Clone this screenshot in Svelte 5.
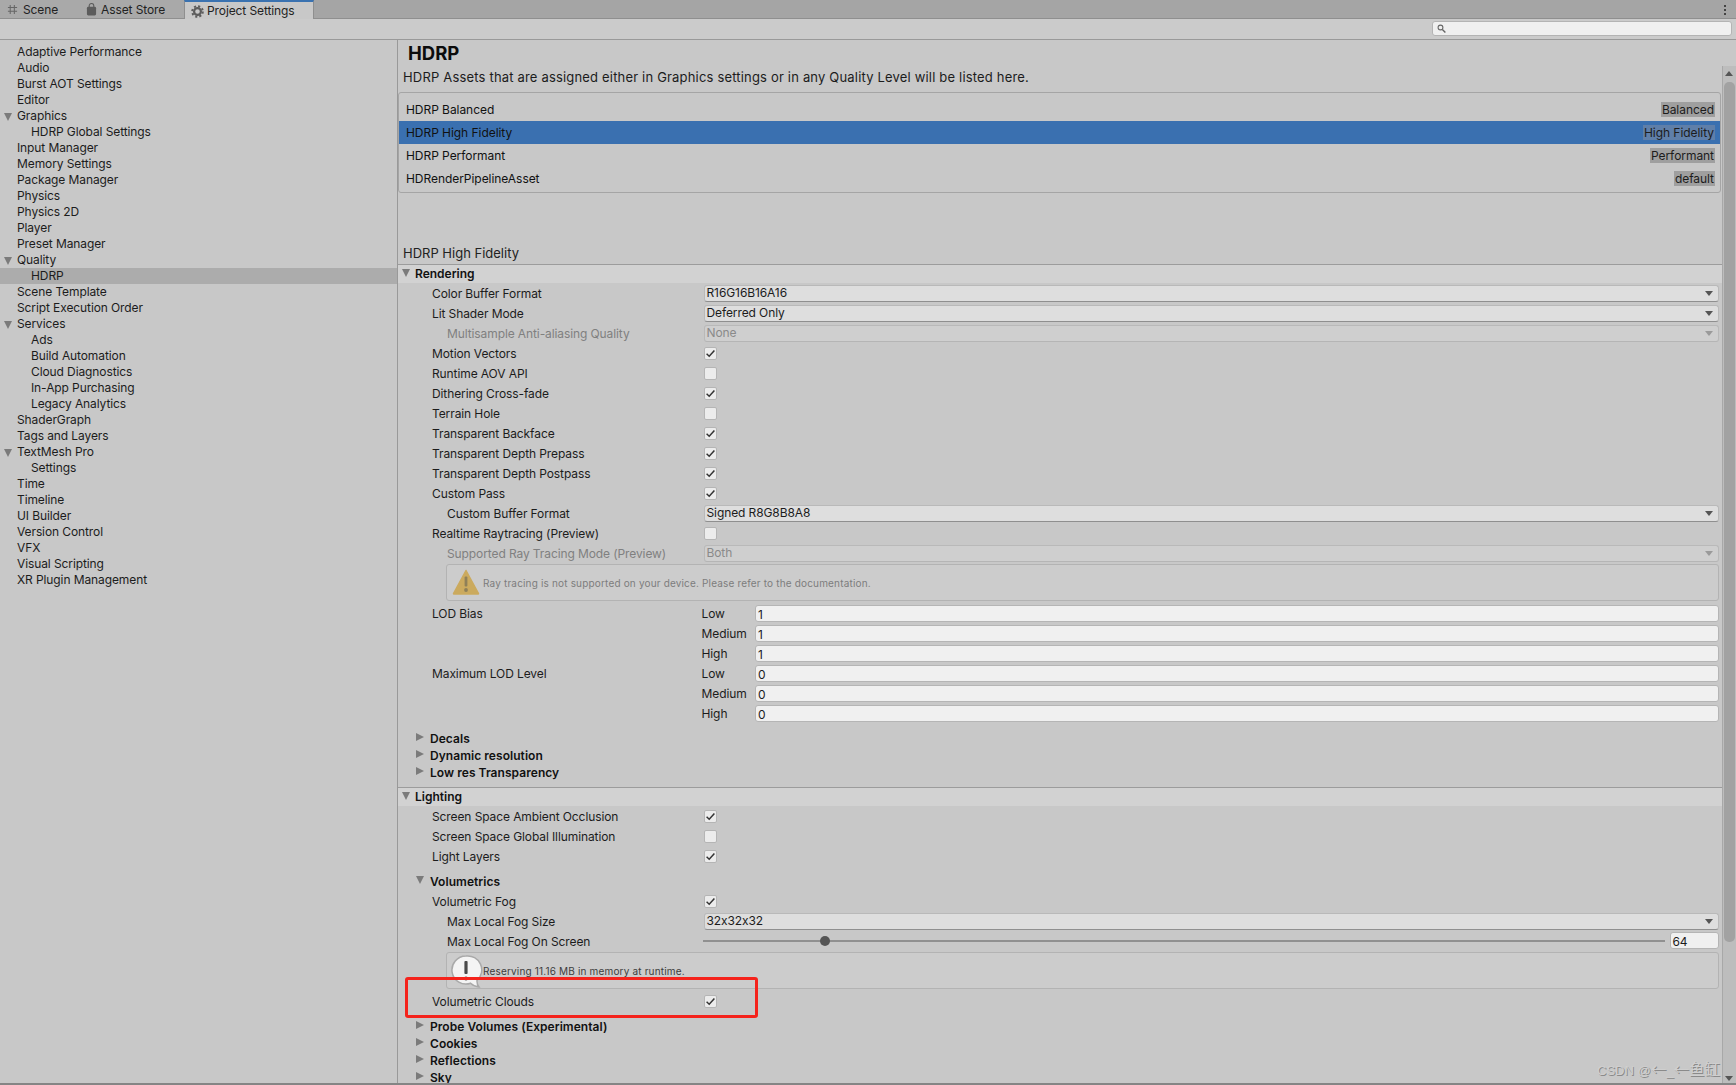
<script>
  const nav = [
    { t: 'Adaptive Performance' }, { t: 'Audio' }, { t: 'Burst AOT Settings' }, { t: 'Editor' },
    { t: 'Graphics', open: true }, { t: 'HDRP Global Settings', sub: true }, { t: 'Input Manager' },
    { t: 'Memory Settings' }, { t: 'Package Manager' }, { t: 'Physics' }, { t: 'Physics 2D' },
    { t: 'Player' }, { t: 'Preset Manager' }, { t: 'Quality', open: true }, { t: 'HDRP', sub: true, sel: true },
    { t: 'Scene Template' }, { t: 'Script Execution Order' }, { t: 'Services', open: true },
    { t: 'Ads', sub: true }, { t: 'Build Automation', sub: true }, { t: 'Cloud Diagnostics', sub: true },
    { t: 'In-App Purchasing', sub: true }, { t: 'Legacy Analytics', sub: true }, { t: 'ShaderGraph' },
    { t: 'Tags and Layers' }, { t: 'TextMesh Pro', open: true }, { t: 'Settings', sub: true }, { t: 'Time' },
    { t: 'Timeline' }, { t: 'UI Builder' }, { t: 'Version Control' }, { t: 'VFX' }, { t: 'Visual Scripting' },
    { t: 'XR Plugin Management' }
  ];
  const assets = [
    { n: 'HDRP Balanced', q: 'Balanced' },
    { n: 'HDRP High Fidelity', q: 'High Fidelity', sel: true },
    { n: 'HDRP Performant', q: 'Performant' },
    { n: 'HDRenderPipelineAsset', q: 'default' }
  ];
  const rendering = [
    { l: 'Color Buffer Format', d: 'R16G16B16A16' },
    { l: 'Lit Shader Mode', d: 'Deferred Only' },
    { l: 'Multisample Anti-aliasing Quality', d: 'None', sub: true, off: true },
    { l: 'Motion Vectors', c: true },
    { l: 'Runtime AOV API', c: false },
    { l: 'Dithering Cross-fade', c: true },
    { l: 'Terrain Hole', c: false },
    { l: 'Transparent Backface', c: true },
    { l: 'Transparent Depth Prepass', c: true },
    { l: 'Transparent Depth Postpass', c: true },
    { l: 'Custom Pass', c: true },
    { l: 'Custom Buffer Format', d: 'Signed R8G8B8A8', sub: true },
    { l: 'Realtime Raytracing (Preview)', c: false },
    { l: 'Supported Ray Tracing Mode (Preview)', d: 'Both', sub: true, off: true }
  ];
  const lod = [
    { l: 'LOD Bias', s: 'Low', v: '1' }, { l: '', s: 'Medium', v: '1' }, { l: '', s: 'High', v: '1' },
    { l: 'Maximum LOD Level', s: 'Low', v: '0' }, { l: '', s: 'Medium', v: '0' }, { l: '', s: 'High', v: '0' }
  ];
  const lighting = [
    { l: 'Screen Space Ambient Occlusion', c: true },
    { l: 'Screen Space Global Illumination', c: false },
    { l: 'Light Layers', c: true }
  ];
  const volFirst = [
    { l: 'Volumetric Fog', c: true },
    { l: 'Max Local Fog Size', d: '32x32x32', sub: true }
  ];
</script>

{#snippet row(r)}
  <div class="row" class:off={r.off}>
    <div class="label" class:sub={r.sub}>{r.l}</div>
    {#if r.d}
      <div class="drop" class:dis={r.off}>
        <span>{r.d}</span>
        <i class="caret"></i>
      </div>
    {:else}
      <div class="check">
        {#if r.c}
          <svg width="11" height="11" viewBox="0 0 11 11"><path d="M1.6 5.8 L4.2 8.2 L9.4 2.4" fill="none" stroke="#333" stroke-width="1.5"/></svg>
        {/if}
      </div>
    {/if}
  </div>
{/snippet}

{#snippet fold(t, open)}
  <div class="fold">
    <i class={open ? 'tri-down' : 'tri-right'}></i>
    <b>{t}</b>
  </div>
{/snippet}

<div class="root">
  <div class="tabs">
    <div class="tab scene">
      <svg width="11" height="11" viewBox="0 0 12 12"><path d="M3.5 1v10M8 1v10M1 3.8h10M1 8h10" stroke="#666" stroke-width="1.1" fill="none"/></svg>
      <span>Scene</span>
    </div>
    <div class="tab store">
      <svg width="11" height="13" viewBox="0 0 12 14"><path d="M3.5 5V3a2.5 2.5 0 0 1 5 0v2" stroke="#5c5c5c" stroke-width="1.2" fill="none"/><rect x="1" y="4" width="10" height="9.5" rx="1.5" fill="#5c5c5c"/></svg>
      <span>Asset Store</span>
    </div>
    <div class="tab active">
      <svg width="13" height="13" viewBox="0 0 13 13"><circle cx="6.5" cy="6.5" r="3.4" fill="none" stroke="#5c5c5c" stroke-width="2.2"/><circle cx="6.5" cy="6.5" r="5.3" fill="none" stroke="#5c5c5c" stroke-width="2" stroke-dasharray="2.1 2.06"/></svg>
      <span>Project Settings</span>
    </div>
    <div class="kebab"><i></i><i></i><i></i></div>
  </div>

  <div class="toolbar">
    <div class="search">
      <svg width="9" height="9" viewBox="0 0 9 9"><circle cx="3.5" cy="3.5" r="2.4" fill="none" stroke="#666" stroke-width="1.1"/><path d="M5.4 5.4 8.4 8.4" stroke="#666" stroke-width="1.4"/></svg>
    </div>
  </div>

  <div class="main">
    <nav class="side">
      {#each nav as n}
        <div class="nav" class:sub={n.sub} class:sel={n.sel}>
          {#if n.open}<i class="tri-down navtri"></i>{/if}
          {n.t}
        </div>
      {/each}
    </nav>

    <section class="content">
      <h1>HDRP</h1>
      <p class="intro">HDRP Assets that are assigned either in Graphics settings or in any Quality Level will be listed here.</p>
      <div class="assets">
        {#each assets as a}
          <div class="asset" class:sel={a.sel}>
            <span>{a.n}</span>
            <em>{a.q}</em>
          </div>
        {/each}
      </div>
      <div class="assetname">HDRP High Fidelity</div>

      <div class="head"><i class="tri-down"></i><b>Rendering</b></div>
      {#each rendering as r}{@render row(r)}{/each}
      <div class="help warn">
        <svg class="warnicon" width="28" height="26" viewBox="0 0 28 26"><path d="M14 1.5 26.5 24.5a.5.5 0 0 1-.5.5H2a.5.5 0 0 1-.5-.5Z" fill="#cbaa5e" stroke="#cbaa5e" stroke-linejoin="round" stroke-width="1.5"/><rect x="12.6" y="7.5" width="2.8" height="10" rx="1" fill="#8f8058"/><circle cx="14" cy="21" r="1.9" fill="#8f8058"/></svg>
        <span>Ray tracing is not supported on your device. Please refer to the documentation.</span>
      </div>
      <div class="lod">
        {#each lod as r}
          <div class="row">
            <div class="label">{r.l}</div>
            <div class="sublabel">{r.s}</div>
            <div class="field">{r.v}</div>
          </div>
        {/each}
      </div>
      <div class="folds">
        {@render fold('Decals', false)}
        {@render fold('Dynamic resolution', false)}
        {@render fold('Low res Transparency', false)}
      </div>

      <div class="head light"><i class="tri-down"></i><b>Lighting</b></div>
      {#each lighting as r}{@render row(r)}{/each}
      <div class="volhead">{@render fold('Volumetrics', true)}</div>
      {#each volFirst as r}{@render row(r)}{/each}
      <div class="row">
        <div class="label sub">Max Local Fog On Screen</div>
        <div class="slider">
          <div class="track"><i class="thumb"></i></div>
          <div class="field num">64</div>
        </div>
      </div>
      <div class="help info">
        <svg class="infoicon" width="32" height="34" viewBox="0 0 32 34"><path d="M15 1a14 14 0 1 0 4.6 27.2c2.6 2.4 5.4 3.6 8.4 3.8-1.6-2-2.2-4-2-6.6A14 14 0 0 0 15 1Z" fill="#f4f4f4" stroke="#a9a9a9" stroke-width="1.5"/><rect x="13.4" y="6" width="3.2" height="13" rx="1" fill="#4a4a4a"/><circle cx="15" cy="23.5" r="2" fill="#4a4a4a"/></svg>
        <span>Reserving 11.16 MB in memory at runtime.</span>
      </div>
      {@render row({ l: 'Volumetric Clouds', c: true })}
      <div class="folds last">
        {@render fold('Probe Volumes (Experimental)', false)}
        {@render fold('Cookies', false)}
        {@render fold('Reflections', false)}
        {@render fold('Sky', false)}
      </div>
    </section>

    <aside class="scroll">
      <i class="up"></i>
      <div class="thumbbar"></div>
      <i class="down"></i>
    </aside>
  </div>

  <div class="redbox"></div>
  <div class="mark">CSDN @<span>←</span>_<span>←鱼缸</span></div>
</div>

<style>
  :global(body) { margin: 0; background: #c8c8c8; overflow: hidden; }
  .root {
    position: relative; width: 1736px; height: 1085px; overflow: hidden;
    background: #c8c8c8; color: #111; font: 12px/16px Inter, "Noto Sans", sans-serif;
    font-feature-settings: "calt" 0;
    letter-spacing: -.1px;
    border-bottom: 2px solid #858585; box-sizing: border-box;
  }
  i { display: block; font-style: normal; }

  .tabs { height: 19px; display: flex; background: #a5a5a5; position: relative; box-sizing: border-box; }
  .tab { display: flex; align-items: center; height: 19px; box-sizing: border-box; color: #222; }
  .scene { width: 80px; padding: 1px 0 0 7px; gap: 5px; background: #a9a9a9; border-bottom: 1px solid #8f8f8f; }
  .store { width: 104px; padding: 1px 0 0 6px; gap: 4px; background: #a9a9a9; border-bottom: 1px solid #8f8f8f; }
  .active { width: 130px; padding: 1px 0 0 6px; gap: 3px; background: #c8c8c8; border-top: 2px solid #3a72b0; border-right: 1px solid #8f8f8f; border-left: 1px solid #8f8f8f; }
  .tabs::after { content: ""; flex: 1; height: 19px; border-bottom: 1px solid #8f8f8f; box-sizing: border-box; }
  .kebab { position: absolute; right: 10px; top: 5px; display: flex; flex-direction: column; gap: 2px; }
  .kebab i { width: 2px; height: 2px; background: #444; }

  .toolbar { height: 21px; box-sizing: border-box; border-bottom: 1px solid #999; display: flex; justify-content: flex-end; padding: 2px 4px 0 0; background: #cbcbcb; }
  .search { width: 300px; height: 15px; box-sizing: border-box; background: #f0f0f0; border: 1px solid #b4b4b4; border-radius: 3px; padding-left: 4px; display: flex; align-items: center; }

  .main { display: flex; height: 1043px; overflow: hidden; }
  .side { width: 397px; flex: none; padding-top: 4px; border-right: 1px solid #999; }
  .nav { height: 16px; line-height: 16px; padding-left: 17px; position: relative; color: #1c1c1c; white-space: nowrap; }
  .nav.sub { padding-left: 31px; }
  .nav.sel { background: #acacac; }
  .navtri { position: absolute; left: 4px; top: 5px; }
  .tri-down { width: 0; height: 0; border-left: 4.5px solid transparent; border-right: 4.5px solid transparent; border-top: 8px solid #7b7b7b; }
  .tri-right { width: 0; height: 0; border-top: 4.5px solid transparent; border-bottom: 4.5px solid transparent; border-left: 8px solid #7b7b7b; }

  .content { flex: 1; min-width: 0; overflow: hidden; }
  h1 { margin: 0; height: 26px; line-height: 27px; padding-left: 10px; font-size: 18.5px; font-weight: 700; letter-spacing: 0; color: #0c0c0c; }
  .intro { margin: 0; height: 22px; line-height: 22px; padding-left: 5px; color: #1c1c1c; font-size: 13px; letter-spacing: .18px; }
  .assets { margin: 4px 1px 0 0; height: 101px; box-sizing: border-box; padding: 5px 0 4px; border: 1px solid #a5a5a5; border-radius: 3px; letter-spacing: -.05px; }
  .asset { height: 23px; display: flex; align-items: center; justify-content: space-between; padding: 0 5px 0 7px; }
  .asset em { font-style: normal; background: #9f9f9f; height: 15px; line-height: 15px; padding: 0 1px; color: #1c1c1c; }
  .asset.sel { background: #3a70b0; }
  .asset.sel em { background: #5f7fa9; }
  .assetname { margin-top: 51px; height: 20px; line-height: 19px; padding-left: 5px; color: #222; border-bottom: 1px solid #9c9c9c; font-size: 13px; letter-spacing: 0; }

  .head { height: 18px; line-height: 17px; background: #d2d2d2; display: flex; align-items: center; gap: 5px; padding-left: 4px; box-sizing: border-box; }
  .head b { font-weight: 600; color: #111; letter-spacing: 0; margin-top: -2px; }
  .head i { margin-top: -2px; }
  .light { margin-top: 6px; height: 19px; border-top: 1px solid #9c9c9c; }

  .row { display: grid; grid-template-columns: 305.5px 1fr; height: 20px; align-items: center; padding-right: 3.5px; }
  .label { padding-left: 34px; padding-top: 2px; color: #1c1c1c; white-space: nowrap; }
  .label.sub { padding-left: 49px; }
  .off .label { color: #808080; }
  .drop { height: 17px; box-sizing: border-box; background: #dedede; border: 1px solid #b9b9b9; border-bottom-color: #8f8f8f; border-radius: 3px; padding-left: 2px; display: flex; align-items: center; justify-content: space-between; line-height: 15px; color: #1c1c1c; }
  .drop span { margin-top: -1px; }
  .drop.dis { background: #cfcfcf; color: #8a8a8a; border-bottom-color: #b5b5b5; }
  .caret { width: 0; height: 0; margin-right: 5px; border-left: 4px solid transparent; border-right: 4px solid transparent; border-top: 5px solid #555; }
  .dis .caret { border-top-color: #9a9a9a; }
  .check { width: 13px; height: 13px; box-sizing: border-box; background: #ececec; border: 1px solid #b5b5b5; border-radius: 2px; display: flex; align-items: center; justify-content: center; }

  .help { position: relative; margin: 1px 3px 0 48px; height: 37px; box-sizing: border-box; border: 1px solid #b3b3b3; border-radius: 3px; background: #cccccc; display: flex; align-items: center; padding-left: 36px; font-size: 10px; letter-spacing: .17px; }
  .warn { margin-bottom: 2px; color: #7d7d7d; }
  .warnicon { position: absolute; left: 5px; top: 4px; }
  .info { margin-bottom: 2px; color: #3c3c3c; }
  .info span { margin-top: 1px; }
  .infoicon { position: absolute; left: 4px; top: 2px; }

  .lod .row { grid-template-columns: 303.5px 53.5px 1fr; }
  .sublabel { color: #1c1c1c; padding-top: 2px; }
  .field { height: 17px; padding-top: 1px; box-sizing: border-box; background: #f0f0f0; border: 1px solid #b5b5b5; border-radius: 3px; padding-left: 2px; line-height: 15px; color: #1c1c1c; }

  .folds { padding-top: 7px; }
  .fold { height: 17px; display: flex; align-items: center; padding-left: 18px; position: relative; }
  .fold i { position: absolute; left: 18px; top: 3px; }
  .fold b { margin-left: 14px; font-weight: 600; color: #111; letter-spacing: .05px; white-space: nowrap; }
  .volhead { padding-top: 7px; height: 17px; box-sizing: content-box; padding-bottom: 1px; }
  .folds.last { padding-top: 7px; }

  .slider { display: flex; align-items: center; }
  .track { flex: 1; height: 2px; background: #909090; position: relative; margin: 0 5px 0 -1px; }
  .thumb { position: absolute; left: 117px; top: -4px; width: 10px; height: 10px; border-radius: 50%; background: #555; }
  .field.num { width: 49px; flex: none; margin-top: -1px; }

  .scroll { width: 14px; flex: none; position: relative; margin-top: 26px; background: #bdbdbd; border-left: 1px solid #a8a8a8; box-sizing: border-box; }
  .thumbbar { position: absolute; left: 1px; right: 1px; top: 16px; height: 860px; background: #a2a2a2; border-radius: 5px; }
  .up, .down { position: absolute; left: 2px; width: 0; height: 0; border-left: 4px solid transparent; border-right: 4px solid transparent; }
  .up { top: 5px; border-bottom: 5px solid #555; }
  .down { bottom: 2px; border-top: 5px solid #555; }

  .redbox { position: absolute; left: 405px; top: 977px; width: 353px; height: 41px; box-sizing: border-box; border: 3px solid #f5231c; border-radius: 3px; }
  .mark { position: absolute; left: 1597px; top: 1058px; font: 13px/20px "Liberation Sans", "Noto Sans CJK SC", sans-serif; letter-spacing: 0; color: #cfcfcf; text-shadow: 1px 1px 0 #8a8a8a; white-space: nowrap; }
  .mark span { font: 15.5px/20px "Noto Sans CJK SC", sans-serif; }
</style>
